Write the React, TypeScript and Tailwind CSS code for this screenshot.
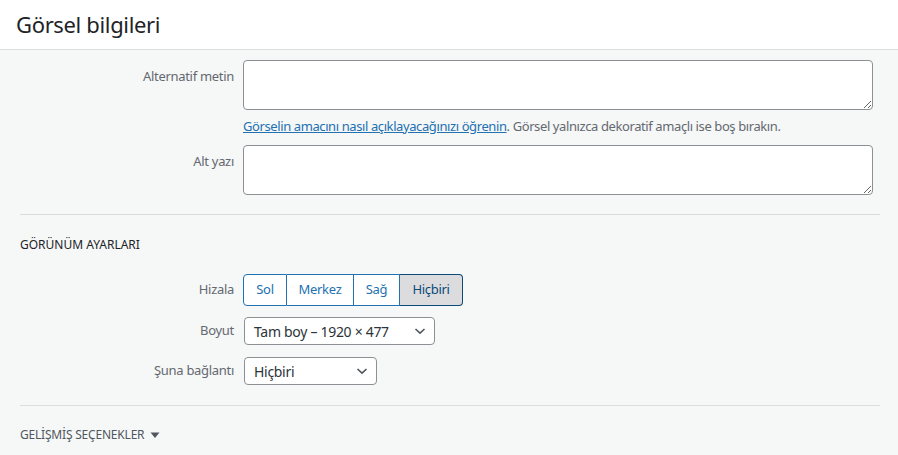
import React from "react";

const font = { fontFamily: '"Noto Sans", "Open Sans", sans-serif' };

function Chevron() {
  return (
    <svg width="16" height="16" viewBox="0 0 16 16" className="shrink-0">
      <path d="M3.5 6 L8 10.2 L12.5 6" fill="none" stroke="#50575e" strokeWidth="1.6" />
    </svg>
  );
}

function Select({ value, width }: { value: string; width: string }) {
  return (
    <div
      className={`h-[28px] ${width} flex items-center justify-between pl-[9px] pr-[6px] bg-white border border-[#8c8f94] rounded-[4px] text-[14px] text-[#2c3338]`}
    >
      <span>{value}</span>
      <Chevron />
    </div>
  );
}

export default function App() {
  return (
    <div className="w-[898px] h-[455px] overflow-hidden bg-[#f6f7f7] tracking-[-0.3px]" style={font}>
      <div className="h-[50px] bg-white border-b border-[#dcdcde] flex items-center px-4">
        <h1 className="text-[22px] text-[#1d2327] leading-none -mt-[2px] tracking-[-0.35px]">Görsel bilgileri</h1>
      </div>
      <div className="pl-5 pr-[18px] pt-[10px]">
        <div className="flex">
          <div className="w-[223px] pr-[9px] pt-[7px] text-right text-[13px] text-[#646970]">Alternatif metin</div>
          <textarea className="w-[630px] h-[50px] bg-white border border-[#8c8f94] rounded-[4px] block" />
        </div>
        <div className="flex mt-[6px]">
          <div className="w-[223px]" />
          <p className="text-[13px] leading-[20px] text-[#646970] tracking-[-0.4px]">
            <a className="text-[#2271b1] underline">Görselin amacını nasıl açıklayacağınızı öğrenin</a>. Görsel yalnızca dekoratif amaçlı ise boş bırakın.
          </p>
        </div>
        <div className="flex mt-[9px]">
          <div className="w-[223px] pr-[9px] pt-[7px] text-right text-[13px] text-[#646970]">Alt yazı</div>
          <textarea className="w-[630px] h-[50px] bg-white border border-[#8c8f94] rounded-[4px] block" />
        </div>
        <div className="border-t border-[#dcdcde] mt-[19px]" />
        <h2 className="mt-[20px] text-[12px] leading-[20px] text-[#1d2327] uppercase tracking-[0px]">GÖRÜNÜM AYARLARI</h2>
        <div className="flex items-center mt-[19px]">
          <div className="w-[223px] pr-[9px] text-right text-[13px] text-[#646970]">Hizala</div>
          <div className="flex h-[32px] text-[13px] text-[#2271b1]">
            <div className="w-[44px] flex items-center justify-center bg-white border border-[#2271b1] rounded-l-[4px]">Sol</div>
            <div className="w-[67px] flex items-center justify-center bg-white border border-l-0 border-[#2271b1]">Merkez</div>
            <div className="w-[46px] flex items-center justify-center bg-white border border-l-0 border-[#2271b1]">Sağ</div>
            <div className="w-[63px] flex items-center justify-center bg-[#dcdcde] text-[#0a4b78] border border-l-0 border-[#0a4b78] rounded-r-[4px]">Hiçbiri</div>
          </div>
        </div>
        <div className="flex items-center mt-[11px]">
          <div className="w-[224px] pr-[10px] text-right text-[13px] text-[#646970]">Boyut</div>
          <Select value="Tam boy – 1920 × 477" width="w-[191px]" />
        </div>
        <div className="flex items-center mt-[12px]">
          <div className="w-[224px] pr-[10px] text-right text-[13px] text-[#646970]">Şuna bağlantı</div>
          <Select value="Hiçbiri" width="w-[133px]" />
        </div>
        <div className="border-t border-[#dcdcde] mt-[20px]" />
        <div className="mt-[19px] flex items-center gap-[6px] text-[12px] leading-[20px] text-[#50575e] uppercase tracking-[-0.2px]">
          <span>GELİŞMİŞ SEÇENEKLER</span>
          <svg width="10" height="8" viewBox="0 0 10 8">
            <path d="M0.5 1.5 L9.5 1.5 L5 7 Z" fill="#50575e" />
          </svg>
        </div>
      </div>
    </div>
  );
}
